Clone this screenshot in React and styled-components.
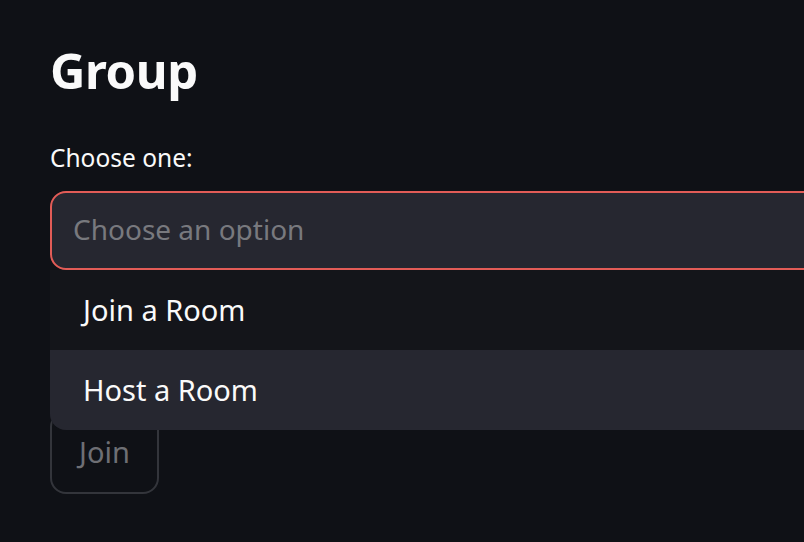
import React from "react";
import styled, { createGlobalStyle } from "styled-components";

const GlobalStyle = createGlobalStyle`
  html, body {
    margin: 0;
    padding: 0;
    background: #0f1116;
    overflow: hidden;
  }
  body {
    font-family: "Noto Sans", "Open Sans", sans-serif;
    color: #fafafa;
  }
`;

const Page = styled.div`
  width: 1100px;
  min-height: 542px;
  padding: 38px 0 0 50px;
  box-sizing: border-box;
`;

const Title = styled.h1`
  margin: 0 0 40px;
  font-size: 49px;
  font-weight: 700;
  line-height: 64px;
  letter-spacing: -0.4px;
`;

const Label = styled.label`
  display: block;
  font-size: 24.5px;
  line-height: 32px;
  margin-bottom: 17px;
`;

const SelectWrap = styled.div`
  position: relative;
`;

const SelectBox = styled.div`
  height: 79px;
  box-sizing: border-box;
  border: 2px solid #e25c57;
  border-radius: 16px;
  background: #262730;
  display: flex;
  align-items: center;
  padding: 0 21px 3px;
  font-size: 28px;
  color: #78797e;
`;

const Menu = styled.ul`
  position: absolute;
  top: 79px;
  left: 0;
  right: 0;
  margin: 0;
  padding: 0;
  list-style: none;
  background: #14151a;
  border-radius: 0 0 16px 16px;
  overflow: hidden;
  z-index: 2;
`;

const Option = styled.li`
  height: 80px;
  box-sizing: border-box;
  display: flex;
  align-items: center;
  padding: 0 33px 2px;
  font-size: 29px;
  color: #fafafa;
  background: ${(p) => (p.$active ? "#262730" : "transparent")};
`;

const Button = styled.button`
  display: block;
  margin-top: 141px;
  height: 83px;
  padding: 0 27px 2px;
  border: 2px solid #33353b;
  border-radius: 16px;
  background: transparent;
  color: #6e6f74;
  font-family: inherit;
  font-size: 29px;
`;

export default function App() {
  return (
    <>
      <GlobalStyle />
      <Page>
        <Title>Group</Title>
        <Label>Choose one:</Label>
        <SelectWrap>
          <SelectBox>Choose an option</SelectBox>
          <Menu>
            <Option>Join a Room</Option>
            <Option $active>Host a Room</Option>
          </Menu>
        </SelectWrap>
        <Button disabled>Join</Button>
      </Page>
    </>
  );
}
